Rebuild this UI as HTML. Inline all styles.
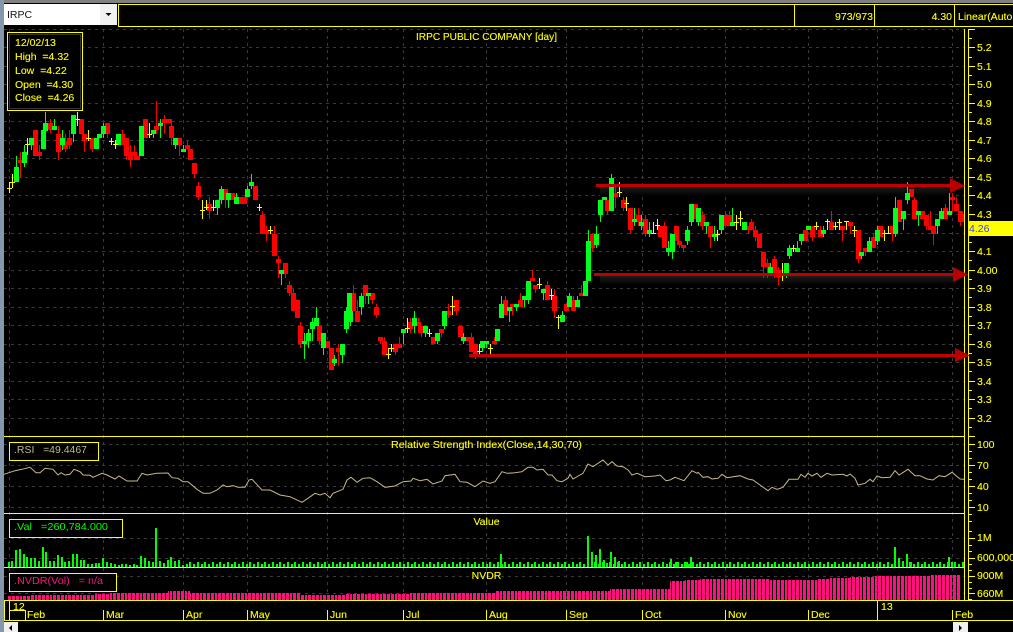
<!DOCTYPE html>
<html><head><meta charset="utf-8"><title>IRPC</title>
<style>
html,body{margin:0;padding:0;background:#000;width:1013px;height:632px;overflow:hidden}
svg{display:block}
text{font-family:"Liberation Sans",sans-serif;font-size:10.5px;fill:#ff0;white-space:pre;stroke:#ff0;stroke-width:.12}
</style></head><body>
<svg width="1013" height="632" viewBox="0 0 1013 632" xmlns="http://www.w3.org/2000/svg">
<defs>
<clipPath id="mc"><rect x="0" y="601" width="1013" height="18.5"/></clipPath>
<clipPath id="pc"><rect x="4" y="27" width="960" height="410"/></clipPath>
<pattern id="nv" x="8" y="0" width="15" height="10" patternUnits="userSpaceOnUse"><rect x="0" y="0" width="3" height="10" fill="#ff0f80"/><rect x="4" y="0" width="3" height="10" fill="#ff0f80"/><rect x="8" y="0" width="3" height="10" fill="#ff0f80"/><rect x="12" y="0" width="2" height="10" fill="#ff0f80"/></pattern>
<linearGradient id="sh" x1="0" y1="0" x2="0" y2="1"><stop offset="0" stop-color="#1c1c1c"/><stop offset="1" stop-color="#000"/></linearGradient>
</defs>
<rect width="1013" height="632" fill="#000"/>
<rect x="0" y="0" width="1013" height="3" fill="#808080"/>
<rect x="0" y="0" width="4" height="632" fill="#8497ad"/>

<!-- top bar -->
<rect x="4" y="4" width="113" height="21" fill="#fff"/>
<rect x="100" y="4" width="17" height="21" fill="#f0f0f0"/>
<polygon points="105.5,13 111.5,13 108.5,16" fill="#000"/>
<text x="7" y="18" style="fill:#111;stroke:none">IRPC</text>
<path shape-rendering="crispEdges" fill="none" stroke="#ff0" d="M118.5 26V4.5H1013M118 26.5H1013M794.5 4V26M874.5 4V26M954.5 4V26"/>
<text x="873" y="20" text-anchor="end">973/973</text>
<text x="952" y="20" text-anchor="end">4.30</text>
<text x="958" y="20">Linear(Auto</text>

<!-- grid -->
<path shape-rendering="crispEdges" fill="none" stroke="#3a3a3a" stroke-dasharray="3 4" d="M4 29.5H964M4 47.5H964M4 66.5H964M4 84.5H964M4 103.5H964M4 121.5H964M4 140.5H964M4 158.5H964M4 177.5H964M4 195.5H964M4 214.5H964M4 233.5H964M4 251.5H964M4 270.5H964M4 288.5H964M4 307.5H964M4 325.5H964M4 344.5H964M4 362.5H964M4 381.5H964M4 399.5H964M4 418.5H964M4 444.5H964M4 465.5H964M4 486.5H964M4 507.5H964M4 538.5H964M4 558.5H964M4 576.5H964M4 593.5H964"/>
<path shape-rendering="crispEdges" fill="none" stroke="#3a3a3a" stroke-dasharray="3 4" d="M9.5 29V600M103.5 29V600M183.5 29V600M247.5 29V600M327.5 29V600M403.5 29V600M486.5 29V600M566.5 29V600M642.5 29V600M725.5 29V600M808.5 29V600M877.5 29V600M952.5 29V600"/>

<!-- arrow shadows -->
<rect x="600" y="187" width="355" height="9" fill="url(#sh)"/>
<rect x="600" y="276" width="355" height="9" fill="url(#sh)"/>

<!-- candles -->
<g clip-path="url(#pc)" shape-rendering="crispEdges" fill="none">
<path stroke="#f00" stroke-width="1" d="M20.5 152V178M39.5 145V160M50.5 119V133M58.5 126V160M65.5 134V152M69.5 130V149M84.5 134V152M92.5 138V152M107.5 123V138M122.5 130V145M126.5 138V160M130.5 145V167M134.5 145V160M156.5 101V134M164.5 115V134M171.5 119V145M179.5 138V156M187.5 141V149M194.5 163V178M198.5 182V200M209.5 197V219M225.5 189V208M262.5 211V234M266.5 226V241M274.5 226V256M278.5 256V278M285.5 263V278M289.5 281V296M293.5 289V311M300.5 322V348M319.5 326V344M338.5 344V366M353.5 285V311M357.5 300V322M365.5 285V304M372.5 293V304M376.5 304V318M380.5 337V344M384.5 337V355M395.5 344V355M399.5 337V348M410.5 318V333M418.5 318V333M421.5 326V337M441.5 329V337M448.5 304V318M456.5 300V315M471.5 333V352M475.5 344V359M494.5 337V344M505.5 296V315M512.5 304V315M520.5 293V307M532.5 270V281M535.5 285V293M547.5 281V300M554.5 289V318M573.5 296V311M581.5 285V296M592.5 234V252M607.5 200V215M615.5 187V208M623.5 197V211M630.5 208V234M638.5 208V226M645.5 215V237M664.5 222V248M679.5 241V248M683.5 245V252M702.5 211V230M710.5 226V248M725.5 211V226M729.5 211V226M748.5 226V234M751.5 219V230M755.5 226V241M763.5 252V278M767.5 259V278M774.5 256V278M778.5 267V285M812.5 226V241M820.5 226V237M831.5 211V230M842.5 226V241M850.5 222V234M858.5 230V263M865.5 248V256M873.5 234V248M892.5 226V241M914.5 197V219M926.5 215V230M930.5 211V230M933.5 226V245M945.5 204V219M952.5 193V211M956.5 197V211M960.5 211V226"/>
<path stroke="#f00" stroke-width="5" d="M20.5 160V163M35.5 130V156M39.5 152V156M50.5 123V130M58.5 134V152M65.5 141V149M69.5 138V145M81.5 119V134M84.5 134V141M92.5 138V149M107.5 123V134M122.5 134V145M126.5 138V156M130.5 152V160M134.5 152V156M137.5 156V160M145.5 119V138M156.5 126V130M164.5 119V123M168.5 119V123M171.5 126V138M179.5 138V145M187.5 145V149M190.5 149V160M194.5 163V174M198.5 186V197M209.5 204V211M225.5 189V200M232.5 193V200M240.5 197V204M244.5 197V204M255.5 186V200M262.5 215V234M266.5 230V234M274.5 234V256M278.5 259V263M285.5 263V274M289.5 285V293M293.5 293V311M297.5 300V318M300.5 326V344M319.5 326V341M327.5 341V348M331.5 348V370M338.5 348V352M353.5 293V311M357.5 311V322M365.5 285V296M372.5 293V300M376.5 307V315M380.5 337V341M384.5 341V355M395.5 344V352M399.5 344V348M410.5 322V329M418.5 322V326M421.5 326V333M433.5 337V344M441.5 329V333M448.5 311V315M456.5 300V311M460.5 326V337M467.5 337V341M471.5 337V352M475.5 344V356M494.5 341V344M505.5 300V315M512.5 304V307M520.5 300V307M532.5 278V281M535.5 285V289M547.5 285V300M554.5 296V311M566.5 304V311M573.5 300V311M581.5 293V296M592.5 234V248M607.5 200V211M615.5 193V197M623.5 200V208M630.5 208V230M638.5 215V222M645.5 219V234M660.5 226V237M664.5 226V248M676.5 226V241M679.5 241V245M683.5 245V248M695.5 204V219M702.5 215V226M710.5 226V237M725.5 215V226M729.5 215V226M748.5 226V230M751.5 222V230M755.5 230V237M759.5 234V248M763.5 252V267M767.5 263V267M774.5 259V274M778.5 270V277M805.5 230V241M812.5 226V237M820.5 230V237M831.5 222V230M842.5 226V230M850.5 222V226M858.5 230V259M865.5 248V252M873.5 237V248M880.5 226V237M892.5 226V234M899.5 200V222M911.5 189V197M914.5 200V219M922.5 211V219M926.5 215V226M930.5 226V230M933.5 226V234M945.5 208V219M952.5 197V200M956.5 204V211M960.5 211V222M963.5 215V222"/>
<path stroke="#00ff1a" stroke-width="1" d="M16.5 156V182M24.5 145V167M31.5 138V150M45.5 112V131M54.5 119V130M62.5 130V150M73.5 115V142M103.5 123V138M153.5 130V138M160.5 119V138M175.5 138V149M183.5 145V152M217.5 200V215M221.5 186V204M228.5 193V208M236.5 193V204M247.5 186V197M251.5 174V189M281.5 270V285M304.5 333V359M308.5 329V348M312.5 318V341M316.5 307V326M323.5 333V355M334.5 355V366M342.5 344V363M346.5 307V333M350.5 311V326M361.5 293V315M368.5 293V304M403.5 329V344M414.5 311V333M425.5 326V337M437.5 333V344M444.5 311V329M463.5 333V344M482.5 341V352M486.5 341V348M501.5 296V318M509.5 307V322M516.5 304V311M524.5 296V307M528.5 281V304M543.5 289V300M562.5 311V322M569.5 293V307M577.5 296V307M588.5 230V281M596.5 226V248M600.5 200V222M611.5 174V211M634.5 208V226M641.5 215V230M649.5 222V237M668.5 241V256M672.5 234V259M687.5 226V245M691.5 204V226M698.5 208V226M706.5 222V234M714.5 226V241M721.5 215V234M732.5 208V226M770.5 263V273M786.5 263V278M789.5 245V259M797.5 241V252M801.5 234V245M823.5 226V237M861.5 252V259M869.5 237V252M877.5 226V245M895.5 197V237M903.5 211V230M907.5 182V204M918.5 211V226M937.5 219V234M941.5 208V219M949.5 193V215"/>
<path stroke="#00ff1a" stroke-width="5" d="M16.5 167V182M24.5 152V163M31.5 138V145M43.5 130V149M45.5 123V131M54.5 126V130M62.5 138V145M73.5 115V134M96.5 138V149M99.5 134V138M103.5 126V134M118.5 134V145M141.5 126V156M153.5 130V134M160.5 123V126M175.5 138V145M183.5 149V152M217.5 200V208M221.5 189V200M228.5 193V200M236.5 197V204M247.5 189V197M251.5 182V186M281.5 270V274M304.5 341V344M308.5 333V341M312.5 322V329M316.5 318V326M323.5 333V348M334.5 359V363M342.5 344V355M346.5 311V329M350.5 311V322M349.5 293V311M361.5 296V307M368.5 293V296M403.5 329V333M414.5 318V326M425.5 326V333M437.5 333V341M444.5 311V326M463.5 337V341M482.5 341V348M486.5 341V344M497.5 329V341M501.5 304V318M509.5 307V311M516.5 304V307M524.5 296V300M528.5 281V300M543.5 289V293M562.5 315V322M569.5 296V307M577.5 300V307M585.5 281V296M588.5 241V281M596.5 234V245M600.5 200V215M604.5 197V200M611.5 178V211M634.5 219V222M641.5 222V226M649.5 230V234M668.5 248V252M672.5 234V252M687.5 230V241M691.5 204V222M698.5 208V222M706.5 222V226M714.5 234V237M721.5 215V230M732.5 222V226M744.5 222V230M770.5 267V273M786.5 263V273M789.5 248V256M797.5 248V252M801.5 234V241M808.5 226V230M823.5 230V234M861.5 252V256M869.5 241V252M877.5 230V241M895.5 208V234M903.5 211V219M907.5 193V200M918.5 211V215M937.5 219V226M941.5 211V219M949.5 211V215"/>
<path stroke="#ff0" stroke-width="1" d="M9.5 182V193M7 188.5h5M12.5 174V188M10 182.5h5M27.5 138V155M25 144.5h5M77.5 112V126M75 119.5h5M88.5 130V141M86 138.5h5M111.5 138V145M109 141.5h5M115.5 140V149M113 144.5h5M149.5 123V138M147 134.5h5M202.5 200V219M200 210.5h5M206.5 200V210M204 207.5h5M213.5 200V211M211 207.5h5M259.5 204V211M257 207.5h5M270.5 226V234M268 230.5h5M388.5 348V359M386 354.5h5M391.5 344V352M389 348.5h5M407.5 318V333M405 328.5h5M429.5 329V337M427 333.5h5M452.5 296V315M450 306.5h5M479.5 344V354M477 351.5h5M490.5 344V354M488 348.5h5M539.5 278V289M537 284.5h5M551.5 289V300M549 295.5h5M558.5 315V329M556 317.5h5M619.5 182V197M617 192.5h5M626.5 197V211M624 203.5h5M653.5 222V234M651 233.5h5M657.5 219V230M655 225.5h5M717.5 230V241M715 234.5h5M736.5 215V230M734 222.5h5M740.5 211V226M738 218.5h5M782.5 263V281M780 273.5h5M793.5 245V252M791 248.5h5M816.5 222V230M814 226.5h5M827.5 219V230M825 221.5h5M835.5 222V230M833 226.5h5M839.5 219V230M837 222.5h5M846.5 221V230M844 221.5h5M854.5 226V237M852 230.5h5M884.5 230V241M882 233.5h5M888.5 226V234M886 233.5h5"/>
</g>

<!-- red trend lines -->
<rect x="596" y="184" width="358" height="3" fill="#c00000"/>
<rect x="594" y="273" width="362" height="3" fill="#c00000"/>
<rect x="469" y="354" width="490" height="3" fill="#c00000"/>

<!-- RSI -->
<polyline fill="none" stroke="#c8b98a" stroke-width="1" points="4,474.3 9,472.7 15,470.7 22,469.3 30,467.3 36,472.7 40,472.7 45,468.3 53,469.3 58,475 61,472.7 65,475 70,474.3 74,469.3 80,471.7 83,475 90,475.3 93,477.3 102,473.3 107,475 115,479 119,476 127,481 137,481 142,473.3 147,475 157,473.3 168,473 172,477.7 178,478.3 183,481.7 188,481.7 197,489.3 203,493.3 210,493.3 217,490 223,485 227,486.7 233,485.7 238,487.3 245,487.3 249,480 252,479.3 262,490 270,490 280,495 290,496.7 302,502.3 308,498.3 315,493.3 320,495 325,493.3 330,497.7 333,493.3 343,489.3 347,480 351,477.3 357,482.3 363,478.3 370,477.7 377,481.7 385,487.3 395,486 403,481.7 411,481 413,478.3 420,480.7 427,479.3 433,484 442,481 445,475.7 455,474.3 460,481.7 467,482.3 475,486.7 483,481 490,483.3 495,481.7 502,471.7 507,473.3 515,472.7 522,471.7 528,467.3 533,467.3 537,470 543,469.3 548,475 552,475 557,480.7 562,481.7 568,478.3 570,474.3 573,479 583,473.3 588,464 593,466.7 603,460 608,465 612,461.7 617,466 623,466.7 628,470 632,475 637,473.3 645,476.7 655,476 660,475 666,480.7 670,480 675,477.3 684,480.7 692,470.7 697,473.3 698,472.3 703,477.3 708,476.7 712,479 718,478.3 722,474.3 727,477.7 740,475.7 748,479 753,480 760,485 768,490.7 772,487.3 777,489.3 783,487.3 789,479.3 798,479.3 801,474.3 805,477.3 808,473.3 812,476 817,473.3 821,477.3 827,473.3 832,475 843,474.3 847,476 850,474 855,478.3 858,485 865,483.3 870,479.3 873,481.7 877,476 882,477.7 890,477.3 895,470.7 899,475 908,469.3 915,475.7 920,475.7 927,479 933,480 939,475.7 945,476.7 952,472.3 960,479 964,479.3"/>

<!-- Value bars -->
<g shape-rendering="crispEdges" fill="none">
<line x1="189" y1="565.5" x2="964" y2="565.5" stroke="#0f0" stroke-width="3" stroke-dasharray="2 2 2 2 2 2 2 1"/>
<line x1="189" y1="564.5" x2="964" y2="564.5" stroke="#0f0" stroke-width="5" stroke-dasharray="2 6 2 5"/>
<path stroke="#0f0" stroke-width="2" d="M9 567v-5M12 567v-6M16 567v-17M20 567v-18M24 567v-13M27 567v-10M31 567v-9M35 567v-9M39 567v-6M43 567v-20M46 567v-15M50 567v-6M54 567v-6M58 567v-12M62 567v-10M65 567v-5M69 567v-6M73 567v-13M77 567v-13M81 567v-7M84 567v-7M88 567v-3M92 567v-3M96 567v-4M99 567v-4M103 567v-9M107 567v-5M111 567v-4M115 567v-3M119 567v-2M122 567v-3M126 567v-3M130 567v-2M134 567v-3M137 567v-2M141 567v-11M145 567v-9M149 567v-6M153 567v-5M156 567v-39M160 567v-6M164 567v-4M168 567v-7M171 567v-10M175 567v-6M179 567v-7M183 567v-2M187 567v-3M501 567v-13M588 567v-31M592 567v-15M596 567v-12M600 567v-18M604 567v-7M607 567v-4M611 567v-15M615 567v-10M619 567v-6M671 567v-8M676 567v-5M687 567v-5M691 567v-10M895 567v-20M899 567v-9M903 567v-6M907 567v-13M911 567v-5M949 567v-10M952 567v-5"/>
</g>

<!-- NVDR bars -->
<polygon shape-rendering="crispEdges" fill="url(#nv)" points="8,600 8,596 30,596 30,595 95,595 95,594 110,594 110,593 168,593 168,591 190,591 190,593 300,593 300,595 345,595 345,594 410,594 410,593 495,593 495,591 610,591 610,589 670,589 670,581 685,581 685,580 700,580 700,579 770,579 770,580 817,580 817,579 830,579 830,578 850,578 850,577 875,577 875,576 930,576 930,575 961,575 961,600"/>

<!-- panel lines -->
<path shape-rendering="crispEdges" fill="none" stroke="#ff0" d="M4 436.5H965M4 513.5H965M4 567.5H965M4 600.5H1013M4 620.5H1013M4.5 600V621M964.5 29V601M968.5 29V601M9.5 601V620M9 610.5H25M25.5 610V620M103.5 610V620M183.5 610V620M247.5 610V620M327.5 610V620M403.5 610V620M486.5 610V620M566.5 610V620M642.5 610V620M725.5 610V620M808.5 610V620M877.5 601V620M952.5 610V620"/>

<!-- axis ticks -->
<path shape-rendering="crispEdges" fill="none" stroke="#ff0" d="M969 29.5h6M969 47.5h6M969 66.5h6M969 84.5h6M969 103.5h6M969 121.5h6M969 140.5h6M969 158.5h6M969 177.5h6M969 195.5h6M969 214.5h6M969 233.5h6M969 251.5h6M969 270.5h6M969 288.5h6M969 307.5h6M969 325.5h6M969 344.5h6M969 362.5h6M969 381.5h6M969 399.5h6M969 418.5h6M969 436.5h6M969 38.5h3M969 57.5h3M969 75.5h3M969 94.5h3M969 112.5h3M969 131.5h3M969 149.5h3M969 168.5h3M969 186.5h3M969 205.5h3M969 242.5h3M969 260.5h3M969 279.5h3M969 297.5h3M969 316.5h3M969 334.5h3M969 353.5h3M969 371.5h3M969 390.5h3M969 408.5h3M969 427.5h3M969 444.5h6M969 465.5h6M969 486.5h6M969 507.5h6M969 451.5h3M969 458.5h3M969 472.5h3M969 479.5h3M969 493.5h3M969 500.5h3M969 514.5h3M969 521.5h3M969 531.5h3M969 538.5h6M969 545.5h3M969 551.5h3M969 558.5h6M969 564.5h3M969 570.5h3M969 576.5h6M969 582.5h3M969 588.5h3M969 593.5h6M969 599.5h3"/>

<!-- arrows -->
<polygon points="950,178 965,186 950,193" fill="#b80000"/>
<polygon points="953,267 968,274.5 953,282" fill="#b80000"/>
<polygon points="955,348 970,355.5 955,362" fill="#b80000"/>

<!-- info box -->
<rect x="7.5" y="32.5" width="75" height="78" fill="#000" stroke="#ff0" shape-rendering="crispEdges"/>
<rect x="9.5" y="34.5" width="71" height="74" fill="none" stroke="#333" shape-rendering="crispEdges"/>
<text x="15" y="46">12/02/13</text>
<text x="15" y="60">High  =4.32</text>
<text x="15" y="74">Low  =4.22</text>
<text x="15" y="88">Open  =4.30</text>
<text x="15" y="101">Close  =4.26</text>

<text x="416" y="40" textLength="141" lengthAdjust="spacingAndGlyphs">IRPC PUBLIC COMPANY [day]</text>
<text x="391" y="448" textLength="191" lengthAdjust="spacingAndGlyphs">Relative Strength Index(Close,14,30,70)</text>
<text x="486.5" y="525" text-anchor="middle">Value</text>
<text x="486.5" y="579" text-anchor="middle">NVDR</text>

<rect x="9.5" y="442.5" width="89" height="18" fill="#000" stroke="#ff0" shape-rendering="crispEdges"/>
<text x="14" y="453" textLength="73" lengthAdjust="spacingAndGlyphs" style="fill:#c4b98c;stroke:none">.RSI   =49.4467</text>
<rect x="9.5" y="519.5" width="113" height="18" fill="#000" stroke="#ff0" shape-rendering="crispEdges"/>
<text x="14" y="530" textLength="94" lengthAdjust="spacingAndGlyphs" style="fill:#0f0;stroke:none">.Val   =260,784.000</text>
<rect x="9.5" y="573.5" width="107" height="18" fill="#000" stroke="#ff0" shape-rendering="crispEdges"/>
<text x="14" y="584" textLength="89" lengthAdjust="spacingAndGlyphs" style="fill:#ff1480;stroke:none">.NVDR(Vol)   = n/a</text>

<!-- axis labels -->
<text x="977" y="51">5.2</text><text x="977" y="70">5.1</text><text x="977" y="88">5.0</text><text x="977" y="107">4.9</text><text x="977" y="125">4.8</text><text x="977" y="144">4.7</text><text x="977" y="162">4.6</text><text x="977" y="181">4.5</text><text x="977" y="199">4.4</text><text x="977" y="218">4.3</text><text x="977" y="255">4.1</text><text x="977" y="274">4.00</text><text x="977" y="292">3.9</text><text x="977" y="311">3.8</text><text x="977" y="329">3.7</text><text x="977" y="348">3.6</text><text x="977" y="366">3.5</text><text x="977" y="385">3.4</text><text x="977" y="403">3.3</text><text x="977" y="422">3.2</text>
<rect x="969" y="221" width="44" height="15" fill="#ff0"/>
<text x="969" y="232" style="fill:#3a3aff;stroke:none">4.26</text>
<text x="977" y="448">100</text><text x="977" y="469">70</text><text x="977" y="490">40</text><text x="977" y="511">10</text>
<text x="977" y="541">1M</text><text x="977" y="561">600,000</text><text x="977" y="579">900M</text><text x="977" y="597">660M</text>

<!-- time axis -->
<text x="13" y="610">12</text>
<text x="881" y="610">13</text>
<g clip-path="url(#mc)">
<text x="27" y="618">Feb</text><text x="106" y="618">Mar</text><text x="186" y="618">Apr</text><text x="250" y="618">May</text><text x="330" y="618">Jun</text><text x="406" y="618">Jul</text><text x="489" y="618">Aug</text><text x="569" y="618">Sep</text><text x="645" y="618">Oct</text><text x="728" y="618">Nov</text><text x="811" y="618">Dec</text><text x="955" y="618">Feb</text>
</g>

<!-- scroll buttons -->
<rect x="4" y="622" width="14" height="10" fill="#f0f0f0"/>
<polygon points="9,628 12,625 12,631" fill="#000"/>
<rect x="953" y="622" width="15" height="10" fill="#f0f0f0"/>
<polygon points="962,628 959,625 959,631" fill="#000"/>
</svg>
</body></html>
